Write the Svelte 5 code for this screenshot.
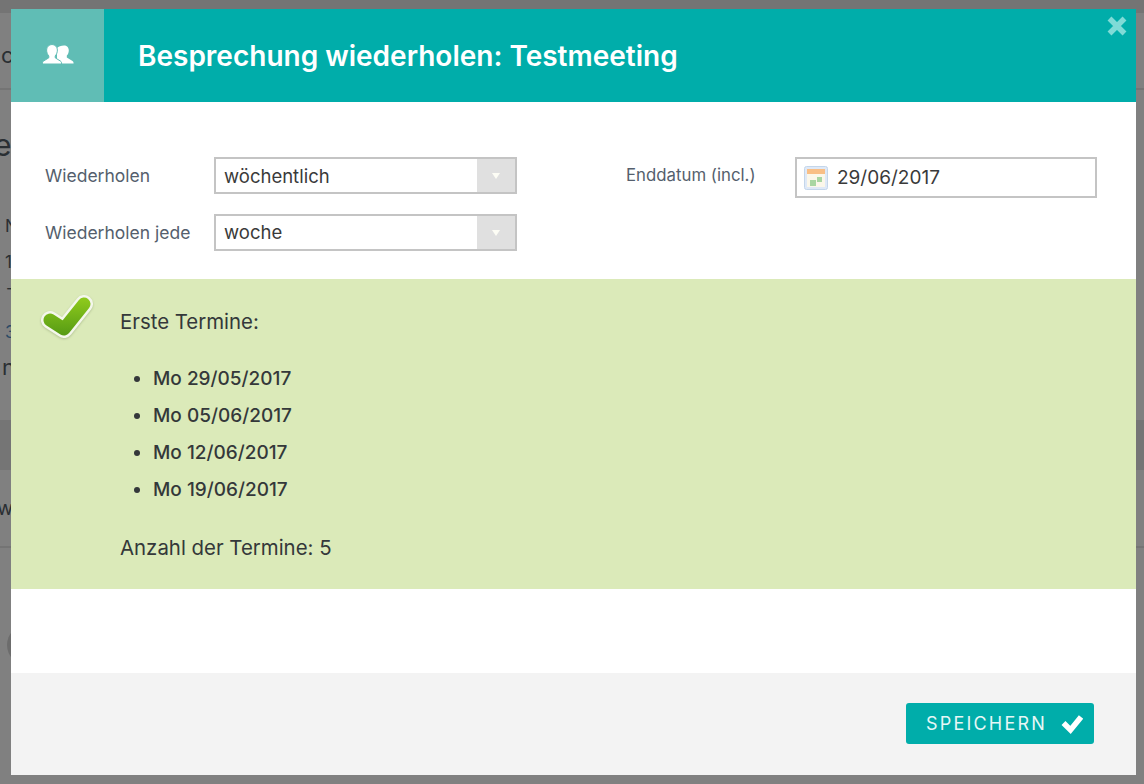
<script>
  const dates = ["Mo 29/05/2017", "Mo 05/06/2017", "Mo 12/06/2017", "Mo 19/06/2017"];
  const peeks = [
    { text: "c", cls: "p1" },
    { text: "e", cls: "p2" },
    { text: "N", cls: "p3" },
    { text: "1", cls: "p4" },
    { text: "-", cls: "p5" },
    { text: "3", cls: "p6" },
    { text: "n", cls: "p7" },
    { text: "w", cls: "p8" }
  ];
</script>

<div class="page">
  <div class="topbar"></div>
  <div class="rule top"></div>
  <div class="band"></div>
  <div class="rule"></div>
  <div class="avatar"></div>
  {#each peeks as p}
    <span class="peek {p.cls}">{p.text}</span>
  {/each}
</div>

<div class="modal">
  <header>
    <div class="head-icon">
      <svg width="34" height="24" viewBox="0 0 34 24" fill="#fff">
        <path d="M23 1.500c2.800 0 4.800 2 4.800 4.900 0 2.200-.9 4-2 5.100v1.900l5.700 3.500c.8.500 1.100 1.300 1.100 2.600H16V4c1.500-1.600 4-2.500 7-2.500z" />
        <path d="M11 .5c3 0 5.400 2.300 5.400 5.500 0 2.500-1 4.700-2.200 5.900v1.900l5.300 3.300c.8.500 1.100 1.300 1.100 2.900H1.400c0-1.600.3-2.400 1.100-2.900l5.300-3.300v-1.900C6.600 10.700 5.600 8.500 5.600 6c0-3.200 2.400-5.500 5.400-5.500z" stroke="#60bdb5" stroke-width="1" />
      </svg>
    </div>
    <h1>Besprechung wiederholen: Testmeeting</h1>
    <svg class="close" width="22" height="22" viewBox="0 0 22 22">
      <path d="M3.500 3.500l15 15M18.500 3.500l-15 15" stroke="#7fdbd7" stroke-width="5.500" />
    </svg>
  </header>

  <section class="form">
    <div class="col">
      <div class="row">
        <label for="rep">Wiederholen</label>
        <div class="select" id="rep">
          <span>wöchentlich</span>
          <i class="arrow"></i>
        </div>
      </div>
      <div class="row">
        <label for="every">Wiederholen jede</label>
        <div class="select" id="every">
          <span>woche</span>
          <i class="arrow"></i>
        </div>
      </div>
    </div>
    <div class="end">
      <label for="end">Enddatum (incl.)</label>
      <div class="date" id="end">
        <svg width="24" height="24" viewBox="0 0 24 24">
          <rect x="0.500" y="0.500" width="23" height="23" rx="2" fill="#dfe9f7" stroke="#c4d6ea" />
          <rect x="3" y="3" width="18" height="18" fill="#fbf7ea" />
          <rect x="3" y="3" width="18" height="5" fill="#f9bf86" />
          <rect x="6" y="14" width="6" height="6" fill="#a9d6a2" />
          <rect x="13" y="11" width="5" height="5" fill="#a9d6a2" />
        </svg>
        <span>29/06/2017</span>
      </div>
    </div>
  </section>

  <section class="notice">
    <svg class="tick" width="54" height="50" viewBox="0 0 54 50">
      <defs>
        <linearGradient id="tickfill" gradientUnits="userSpaceOnUse" x1="0" y1="6" x2="0" y2="42">
          <stop offset="0" stop-color="#8cc81c" />
          <stop offset="1" stop-color="#559a14" />
        </linearGradient>
      </defs>
      <path d="M10 26l14 9L44 10" fill="none" stroke="#f4f7ec" stroke-width="18" stroke-linejoin="round" stroke-linecap="round" />
      <path d="M10 26l14 9L44 10" fill="none" stroke="url(#tickfill)" stroke-width="13" stroke-linejoin="round" stroke-linecap="round" />
    </svg>
    <p class="lead">Erste Termine:</p>
    <ul>
      {#each dates as d}
        <li>{d}</li>
      {/each}
    </ul>
    <p class="count">Anzahl der Termine: 5</p>
  </section>

  <div class="spacer"></div>

  <footer>
    <button type="button">
      SPEICHERN
      <svg width="24" height="22" viewBox="0 0 24 22">
        <path d="M4.500 10l7 7L22 4" fill="none" stroke="#fff" stroke-width="5.500" />
      </svg>
    </button>
  </footer>
</div>

<style>
  :global(body) {
    margin: 0;
    background: #808080;
    font-family: Inter, Lato, sans-serif;
    overflow: hidden;
  }

  .page {
    position: relative;
    width: 1144px;
    height: 784px;
    overflow: hidden;
  }

  .topbar {
    height: 13px;
    background: #747474;
  }

  .band {
    position: absolute;
    left: 0;
    top: 420px;
    width: 100%;
    height: 50px;
    background: #757575;
  }

  .rule {
    position: absolute;
    left: 0;
    top: 546px;
    width: 100%;
    height: 2px;
    background: #747474;
  }

  .rule.top {
    top: 88px;
  }

  .avatar {
    position: absolute;
    left: 7px;
    top: 625px;
    width: 40px;
    height: 40px;
    border-radius: 50%;
    background: #6c6c6c;
  }

  .peek {
    position: absolute;
    color: #2a2f33;
    font-size: 17px;
    line-height: 20px;
  }

  .p1 { left: 1px; top: 43px; font-size: 22px; line-height: 24px; }
  .p2 { left: -6px; top: 130px; font-size: 30px; line-height: 30px; }
  .p3 { left: 5px; top: 216px; }
  .p4 { left: 5px; top: 252px; }
  .p5 { left: 6px; top: 278px; }
  .p6 { left: 5px; top: 322px; color: #2c4a66; }
  .p7 { left: 2px; top: 355px; font-size: 22px; line-height: 24px; }
  .p8 { left: -3px; top: 498px; font-size: 20px; }

  .modal {
    position: absolute;
    left: 11px;
    top: 9px;
    width: 1125px;
    height: 766px;
    display: flex;
    flex-direction: column;
    background: #fff;
  }

  header {
    position: relative;
    display: flex;
    align-items: center;
    height: 93px;
    flex: none;
    background: #00adaa;
  }

  .head-icon {
    width: 93px;
    height: 93px;
    display: flex;
    align-items: center;
    justify-content: center;
    background: #60bdb5;
  }

  h1 {
    margin: 0 0 0 34px;
    font-size: 28px;
    font-weight: 600;
    color: #fff;
  }

  .close {
    position: absolute;
    right: 8px;
    top: 6px;
  }

  .form {
    flex: none;
    height: 177px;
    box-sizing: border-box;
    padding: 55px 39px 0 34px;
    display: flex;
    justify-content: space-between;
  }

  .col {
    display: flex;
    flex-direction: column;
    gap: 20px;
  }

  .row {
    display: flex;
    align-items: center;
  }

  label {
    color: #555f6d;
  }

  .row label {
    width: 169px;
    font-size: 17.500px;
  }

  .select {
    width: 303px;
    height: 37px;
    box-sizing: border-box;
    border: 2px solid #c4c4c4;
    display: flex;
    align-items: center;
    justify-content: space-between;
    font-size: 18.500px;
    color: #3a3a3a;
  }

  .select span {
    padding-left: 8px;
  }

  .row + .row .select span {
    padding-bottom: 2px;
  }

  .arrow {
    width: 38px;
    height: 100%;
    display: flex;
    align-items: center;
    justify-content: center;
    background: #e0e0e0;
  }

  .arrow::after {
    content: "";
    border-left: 4px solid transparent;
    border-right: 4px solid transparent;
    border-top: 6px solid #fdfdf5;
  }

  .end {
    display: flex;
    align-items: flex-start;
  }

  .end label {
    width: 169px;
    padding-top: 8px;
    font-size: 16.800px;
  }

  .date {
    width: 302px;
    height: 41px;
    box-sizing: border-box;
    border: 2px solid #c4c4c4;
    padding-left: 7px;
    display: flex;
    align-items: center;
    gap: 9px;
    font-size: 19px;
    color: #3a3a3a;
  }

  .notice {
    position: relative;
    flex: none;
    height: 310px;
    box-sizing: border-box;
    padding: 31px 0 0 109px;
    background: #dbeab9;
    color: #34383a;
  }

  .tick {
    position: absolute;
    left: 29px;
    top: 15px;
    filter: drop-shadow(0 1px 1px rgba(60, 80, 30, 0.25));
  }

  .lead,
  .count {
    margin: 0;
    font-size: 20.400px;
    line-height: 24px;
  }

  ul {
    margin: 26px 0 0;
    padding: 0 0 0 33px;
    list-style: disc;
  }

  li {
    font-size: 19px;
    font-weight: 500;
    line-height: 37px;
  }

  .count {
    margin-top: 28px;
  }

  .spacer {
    height: 84px;
    flex: none;
  }

  footer {
    flex: 1;
    background: #f3f3f3;
    display: flex;
    justify-content: flex-end;
    align-items: flex-start;
    padding: 30px 42px 0 0;
  }

  button {
    width: 188px;
    height: 41px;
    border: 0;
    border-radius: 3px;
    background: #00adaa;
    color: #e6f7f6;
    font-family: inherit;
    font-size: 18px;
    letter-spacing: 2.200px;
    display: flex;
    align-items: center;
    gap: 12px;
    padding: 0 0 0 20px;
  }
</style>
